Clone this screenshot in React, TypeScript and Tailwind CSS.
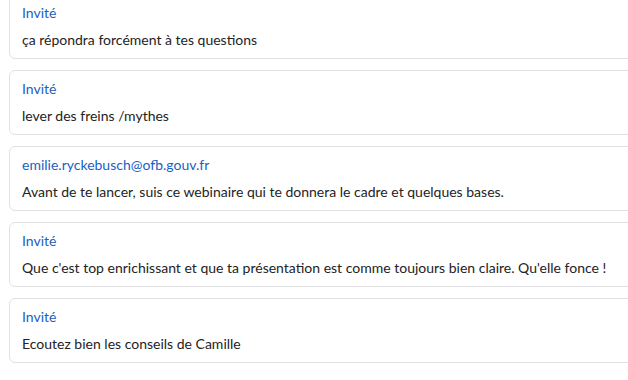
const messages = [
  { author: 'Invité', text: 'ça répondra forcément à tes questions' },
  { author: 'Invité', text: 'lever des freins /mythes' },
  { author: 'emilie.ryckebusch@ofb.gouv.fr', text: 'Avant de te lancer, suis ce webinaire qui te donnera le cadre et quelques bases.' },
  { author: 'Invité', text: "Que c'est top enrichissant et que ta présentation est comme toujours bien claire. Qu'elle fonce !" },
  { author: 'Invité', text: 'Ecoutez bien les conseils de Camille' },
];

export default function App() {
  return (
    <div className="w-[628px] h-[380px] overflow-hidden bg-white" style={{ fontFamily: 'Lato, "Noto Sans", sans-serif' }}>
      <div className="-mt-[6px] pl-[9px] flex flex-col gap-[11px]">
        {messages.map((m, i) => (
          <div key={i} className="w-[640px] shrink-0 border border-[#e1e1e4] rounded-[6px] bg-white pt-[9px] pb-[8px] px-[12px]">
            <div className="text-[14px] leading-[18px] text-[#1a5fc4]">{m.author}</div>
            <div className="mt-[8px] text-[14px] leading-[20px] text-[#232323] whitespace-nowrap">{m.text}</div>
          </div>
        ))}
      </div>
    </div>
  );
}
